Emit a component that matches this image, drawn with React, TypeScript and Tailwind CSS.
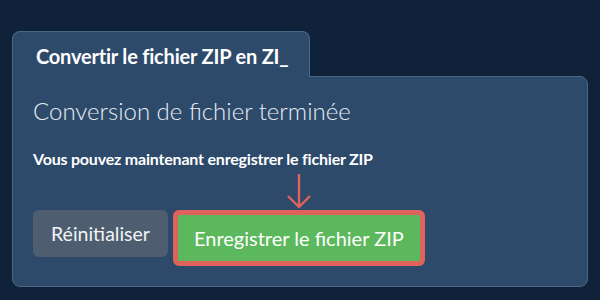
import React from "react";

/**
 * Conversion result panel: tab header, status text and the two actions.
 * The arrow + red ring mark the primary action.
 */
export default function App() {
  return (
    <div
      className="h-[300px] w-[600px] bg-[#10223a] px-3 pt-[31px]"
      style={{ fontFamily: "Lato, 'Open Sans', sans-serif" }}
    >
      <div className="flex">
        <div className="relative z-10 -mb-px flex h-[46px] w-[298px] items-center rounded-t-lg border border-b-0 border-[#4a6786] bg-[#2d4a6b] pl-[23px] pt-[2px]">
          <span className="text-[20px] font-bold tracking-[-0.2px] text-white">
            Convertir le fichier ZIP en ZI_
          </span>
        </div>
      </div>

      <div className="h-[211px] rounded-b-lg rounded-tr-lg border border-[#4a6786] bg-[#2d4a6b] px-5 pt-[18px]">
        <h2 className="text-[24px] font-light leading-8 text-[#e8edf2]">
          Conversion de fichier terminée
        </h2>
        <p className="mt-[22px] text-[16px] font-bold leading-5 tracking-[-0.2px] text-white">
          Vous pouvez maintenant enregistrer le fichier ZIP
        </p>

        <div className="mt-[41px] flex items-start gap-[5px]">
          <button className="h-[47px] rounded-md bg-[#4e5e70] px-[18px] text-[19.5px] text-[#f1f3f5]">
            Réinitialiser
          </button>

          <div className="relative rounded-md border-[5px] border-[#e0625c]">
            <svg
              width="30"
              height="42"
              viewBox="0 0 30 42"
              className="absolute bottom-full left-1/2 mb-[3px] -translate-x-1/2"
            >
              <path
                d="M15 4 V37 M4 26 L15 37 L26 26"
                fill="none"
                stroke="#e0625c"
                strokeWidth="2.4"
              />
            </svg>
            <button className="h-[46px] bg-[#5cb85c] px-4 text-[20px] text-white">
              Enregistrer le fichier ZIP
            </button>
          </div>
        </div>
      </div>
    </div>
  );
}
